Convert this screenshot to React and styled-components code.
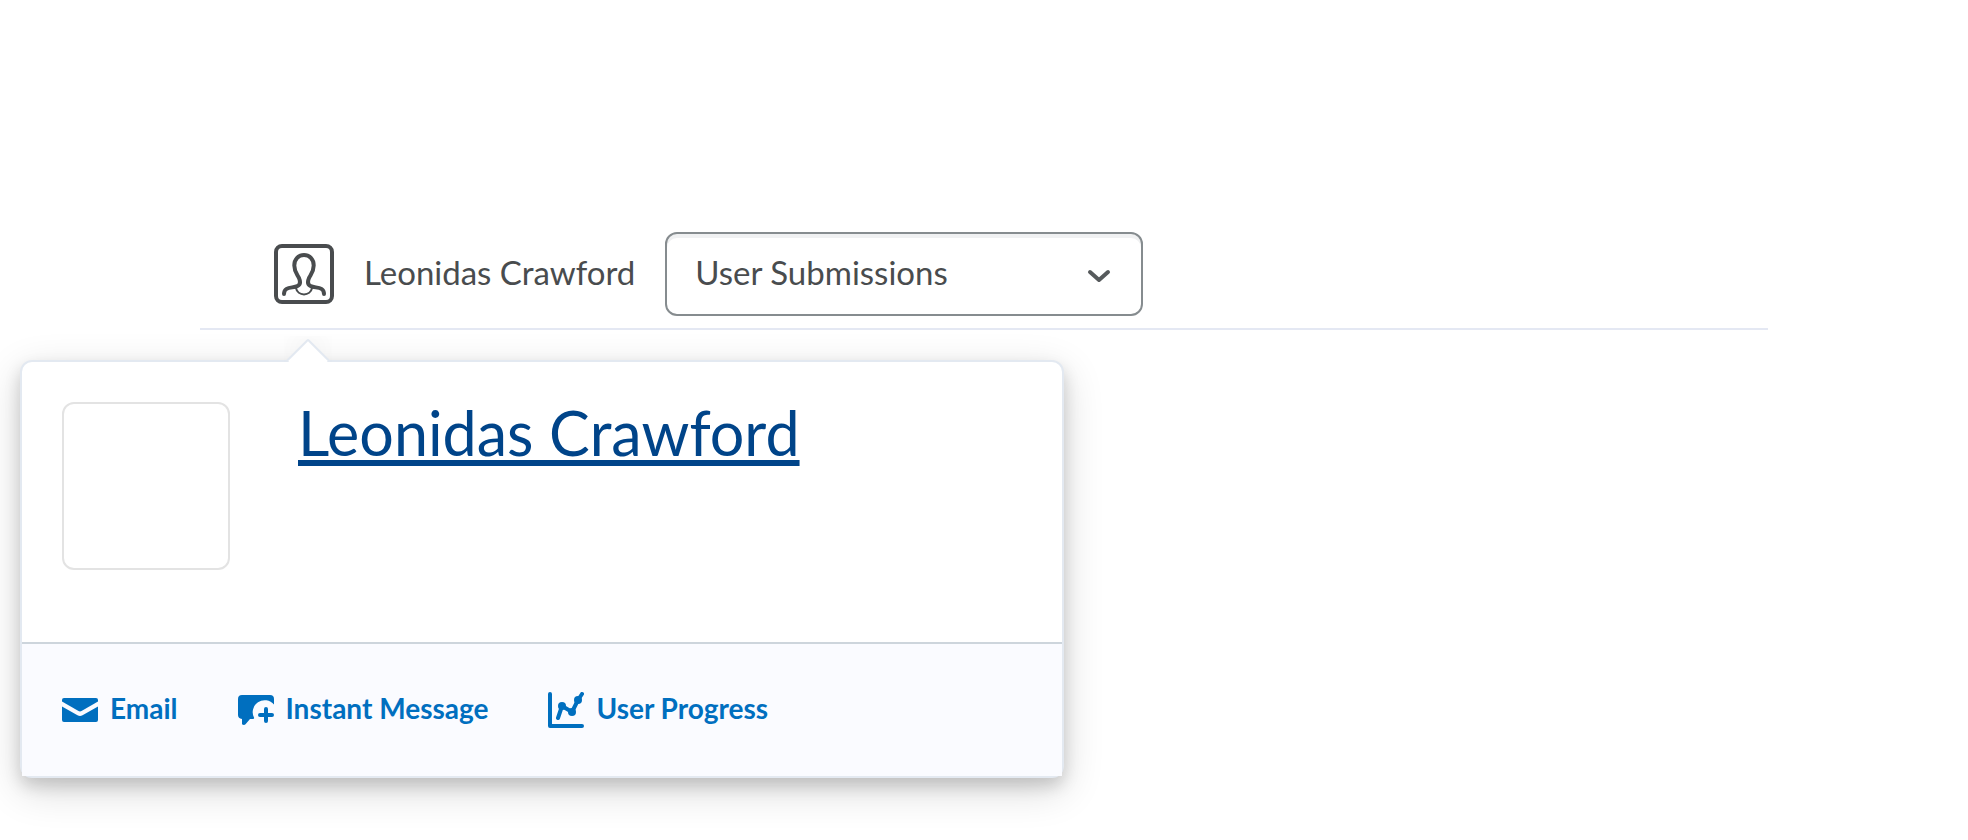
import React from 'react';
import styled, { createGlobalStyle } from 'styled-components';

const GlobalStyle = createGlobalStyle`
  *, *::before, *::after { box-sizing: border-box; }
  body {
    margin: 0;
    background: #ffffff;
    color: #494c4e;
    font-family: Lato, "Liberation Sans", sans-serif;
  }
`;

const Page = styled.main`
  padding: 232px 0 60px;
`;

const Toolbar = styled.header`
  display: flex;
  align-items: center;
  gap: 30px;
  margin: 0 200px;
  padding: 0 74px 12px;
  border-bottom: 2px solid #e4e8f3;
`;

const UserLabel = styled.span`
  padding-bottom: 4px;
  font-size: 33px;
  line-height: 48px;
  white-space: nowrap;
`;

const SelectBox = styled.label`
  position: relative;
  display: block;
  flex: 0 1 478px;
`;

const Select = styled.select`
  appearance: none;
  display: block;
  width: 100%;
  height: 84px;
  padding: 0 80px 4px 28px;
  border: 2px solid #868c8f;
  border-radius: 12px;
  background: #ffffff;
  box-shadow: inset 0 4px 0 #f0f1f2;
  color: inherit;
  font: inherit;
  font-size: 33px;
  line-height: 48px;
`;

const Chevron = styled.svg`
  position: absolute;
  top: 50%;
  right: 32px;
  width: 24px;
  height: 16px;
  margin-top: -6px;
  pointer-events: none;
`;

const Card = styled.section`
  position: relative;
  max-width: 1044px;
  margin: 30px 20px 0;
  border: 2px solid #e3e9f1;
  border-radius: 12px;
  background: #ffffff;
  box-shadow: 0 8px 16px rgba(0, 0, 0, 0.15), 0 12px 40px rgba(0, 0, 0, 0.16);
`;

const Pointer = styled.div`
  position: absolute;
  bottom: 100%;
  left: 262px;
  width: 48px;
  height: 26px;
  overflow: hidden;

  &::before {
    content: "";
    position: absolute;
    top: 9px;
    left: 8px;
    width: 32px;
    height: 32px;
    border: 2px solid #e3e9f1;
    border-radius: 2px;
    background: #ffffff;
    box-shadow: -8px -8px 24px rgba(0, 0, 0, 0.03);
    transform: rotate(45deg);
  }
`;

const Profile = styled.div`
  display: flex;
  align-items: flex-start;
  gap: 68px;
  min-height: 280px;
  padding: 40px;
`;

const Avatar = styled.div`
  flex: none;
  width: 168px;
  height: 168px;
  border: 2px solid #e3e3e3;
  border-radius: 12px;
`;

const Name = styled.h2`
  margin: 0;
  font-size: 61px;
  font-weight: 400;
  line-height: 62px;
`;

const NameLink = styled.a`
  color: #004489;
  text-decoration: underline;
  text-decoration-thickness: 6px;
  text-underline-offset: 4px;
  text-decoration-skip-ink: none;
`;

const Actions = styled.footer`
  display: flex;
  flex-wrap: wrap;
  align-items: center;
  gap: 20px 60px;
  padding: 44px 40px;
  border-top: 2px solid #cdd5dc;
  background: #fafbff;
`;

const Action = styled.button`
  display: flex;
  align-items: center;
  gap: 12px;
  padding: 0;
  border: 0;
  background: none;
  color: #006fbf;
  font: inherit;
  font-size: 28px;
  font-weight: 700;
  line-height: 40px;
  cursor: pointer;
`;

const ActionLabel = styled.span`
  padding-bottom: 4px;
`;

const Icon = styled.svg`
  flex: none;
  width: ${({ $size }) => $size}px;
  height: ${({ $size }) => $size}px;
`;

const ProfileIcon = () => (
  <Icon $size={60} viewBox="0 0 60 60" fill="none" stroke="#494c4e" strokeWidth="4" strokeLinecap="round" aria-hidden="true">
    <rect x="2" y="2" width="56" height="56" rx="6" />
    <path d="M10 50 C10 42 19 44.500 23.500 42 C26.500 40.500 26.500 37.500 25 34 C23 30 20.300 27.500 20.300 21.500 C20.300 15 24.500 11 30 11 C35.500 11 39.700 15 39.700 21.500 C39.700 27.500 37 30 35 34 C33.500 37.500 33.500 40.500 36.500 42 C41 44.500 50 42 50 50" />
    <path d="M22 44 C23.500 52.500 36.500 52.500 38 44" strokeWidth="2" />
  </Icon>
);

const EmailIcon = () => (
  <Icon $size={36} viewBox="0 0 36 36" fill="currentColor" aria-hidden="true">
    <path d="M2 6 H34 A2 2 0 0 1 36 8 V9.500 L19.500 19 Q18 19.800 16.500 19 L0 9.500 V8 A2 2 0 0 1 2 6 Z" />
    <path d="M0 14.500 L15.500 23.300 Q18 24.600 20.500 23.300 L36 14.500 V28 A2 2 0 0 1 34 30 H2 A2 2 0 0 1 0 28 Z" />
  </Icon>
);

const MessageIcon = () => (
  <Icon $size={36} viewBox="0 0 36 36" fill="currentColor" aria-hidden="true">
    <path d="M4 3 H32 A4 4 0 0 1 36 7 V12.600 A12 12 0 0 0 16.200 26 Q16 27 15 27 H12 L7.500 32.300 Q6 33.800 4 32.200 V27 Q0 26.500 0 23 V7 A4 4 0 0 1 4 3 Z" />
    <path d="M28 17 V29 M22 23 H34" fill="none" stroke="currentColor" strokeWidth="4" strokeLinecap="round" />
  </Icon>
);

const ProgressIcon = () => (
  <Icon $size={36} viewBox="0 0 36 36" fill="none" stroke="currentColor" strokeWidth="4" strokeLinecap="round" strokeLinejoin="round" aria-hidden="true">
    <path d="M2 2 V34 H34" />
    <path d="M10 26 L14 14 L24 20 L30 8 L34 2" />
    <g fill="currentColor" stroke="none">
      <circle cx="14" cy="14" r="4" />
      <circle cx="24" cy="20" r="4" />
      <circle cx="30" cy="8" r="4" />
    </g>
  </Icon>
);

export default function App() {
  return (
    <>
      <GlobalStyle />
      <Page>
        <Toolbar>
          <ProfileIcon />
          <UserLabel>Leonidas Crawford</UserLabel>
          <SelectBox>
            <Select aria-label="View" defaultValue="submissions">
              <option value="submissions">User Submissions</option>
            </Select>
            <Chevron viewBox="0 0 24 16" fill="none" stroke="#565a5c" strokeWidth="4" strokeLinecap="round" strokeLinejoin="round" aria-hidden="true">
              <path d="M3 4 L12 12 L21 4" />
            </Chevron>
          </SelectBox>
        </Toolbar>
        <Card>
          <Pointer />
          <Profile>
            <Avatar />
            <Name><NameLink href="#profile">Leonidas Crawford</NameLink></Name>
          </Profile>
          <Actions>
            <Action type="button"><EmailIcon /><ActionLabel>Email</ActionLabel></Action>
            <Action type="button"><MessageIcon /><ActionLabel>Instant Message</ActionLabel></Action>
            <Action type="button"><ProgressIcon /><ActionLabel>User Progress</ActionLabel></Action>
          </Actions>
        </Card>
      </Page>
    </>
  );
}
